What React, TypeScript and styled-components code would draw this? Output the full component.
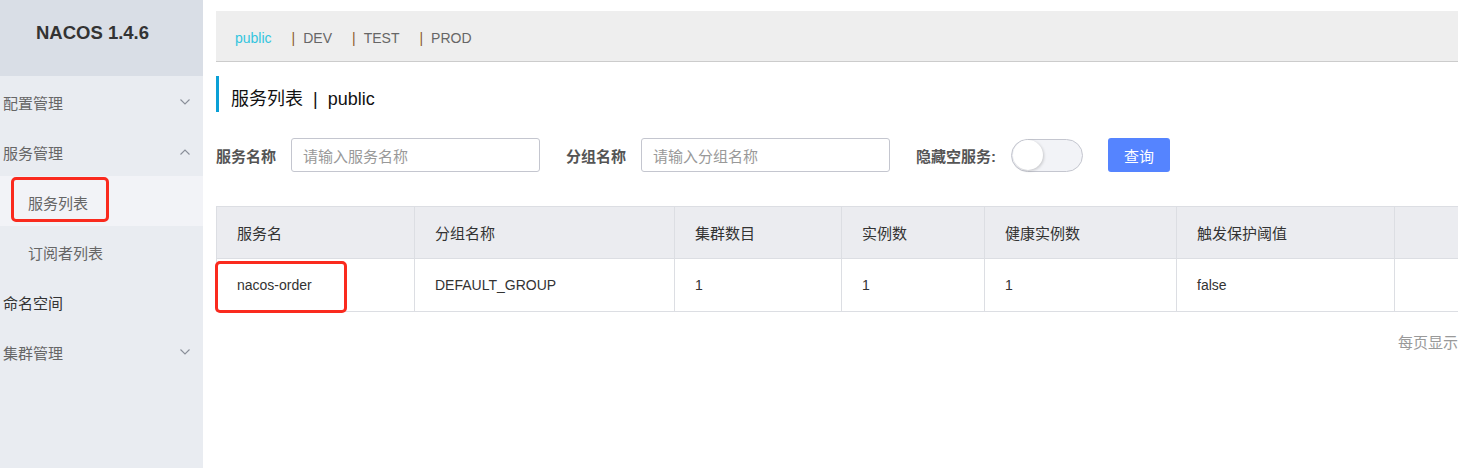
import React from "react";
import styled, { createGlobalStyle } from "styled-components";

const Global = createGlobalStyle`
  html, body { margin: 0; padding: 0; background: #fff; }
  body { font-family: "Liberation Sans", "Noto Sans CJK SC", sans-serif; font-size: 14px; color: #333; overflow: hidden; }
  * { box-sizing: border-box; }
`;

const Page = styled.div`
  position: relative;
  display: flex;
  width: 1458px;
  height: 468px;
  overflow: hidden;
`;

const Sidebar = styled.aside`
  width: 203px;
  flex: none;
  background: #e9ecf1;
  display: flex;
  flex-direction: column;
`;

const Brand = styled.div`
  height: 76px;
  background: #d9dee6;
  display: flex;
  justify-content: center;
  padding: 22px 18px 0 0;
  font-size: 18.5px;
  font-weight: 700;
  color: #333;
  font-family: "Liberation Sans", sans-serif;
`;

const MenuItem = styled.div<{ $dark?: boolean }>`
  height: 50px;
  display: flex;
  align-items: center;
  justify-content: space-between;
  padding: 2px 12px 0 3px;
  font-size: 15px;
  color: ${(p) => (p.$dark ? "#333" : "#666")};
`;

const SubItem = styled.div<{ $active?: boolean }>`
  height: 50px;
  display: flex;
  align-items: center;
  padding: 2px 0 0 28px;
  font-size: 15px;
  color: #666;
  background: ${(p) => (p.$active ? "#f2f3f7" : "transparent")};
`;

const Chevron = ({ up }: { up?: boolean }) => (
  <svg width="12" height="8" viewBox="0 0 12 8" fill="none">
    <path
      d={up ? "M1.5 6.5 L6 2 L10.5 6.5" : "M1.5 1.5 L6 6 L10.5 1.5"}
      stroke="#8a8f99"
      strokeWidth="1.1"
    />
  </svg>
);

const Main = styled.main`
  flex: 1;
  min-width: 0;
  padding: 11px 0 0 13px;
  display: flex;
  flex-direction: column;
`;

const NsBar = styled.div`
  height: 51px;
  background: #eeeeee;
  border-bottom: 1px solid #cccccc;
  display: flex;
  align-items: center;
  padding: 3px 0 0 19px;
  font-size: 14px;
`;

const NsLink = styled.span<{ $active?: boolean }>`
  color: ${(p) => (p.$active ? "#33c5de" : "#666")};
  margin-right: 20px;
`;

const NsSep = styled.span`
  color: #8b5a2b;
  margin-right: 8px;
`;

const Title = styled.div`
  margin-top: 14px;
  height: 36px;
  border-left: 3px solid #0aa0d6;
  padding: 6px 0 0 12px;
  display: flex;
  align-items: center;
  font-size: 18px;
  color: #111;
  white-space: pre;
`;

const Form = styled.div`
  margin-top: 26px;
  display: flex;
  align-items: center;
  height: 34px;
`;

const Label = styled.span<{ $gap: number }>`
  font-weight: 700;
  color: #555;
  font-size: 15px;
  margin-right: ${(p) => p.$gap}px;
`;

const Input = styled.div`
  width: 249px;
  height: 34px;
  border: 1px solid #c4c6cf;
  border-radius: 3px;
  display: flex;
  align-items: center;
  padding: 0 0 0 11px;
  color: #999;
  font-size: 15px;
  margin-right: 26px;
`;

const Switch = styled.div`
  width: 72px;
  height: 33px;
  border: 1px solid #c4c6cf;
  border-radius: 17px;
  background: #f2f3f7;
  display: flex;
  align-items: center;
  padding-left: 1px;
  margin-right: 25px;
`;

const Knob = styled.div`
  width: 30px;
  height: 30px;
  border-radius: 50%;
  background: #fff;
  box-shadow: 1px 1px 3px rgba(0, 0, 0, 0.18);
`;

const Button = styled.button`
  width: 62px;
  height: 34px;
  border: none;
  border-radius: 3px;
  background: #5584ff;
  color: #fff;
  font-family: inherit;
  font-size: 15px;
  padding: 0;
`;

const TableWrap = styled.div`
  margin-top: 34px;
  width: 1300px;
`;

const Table = styled.table`
  border-collapse: collapse;
  table-layout: fixed;
  width: 1300px;
  font-size: 14px;
`;

const Th = styled.th<{ $w: number }>`
  width: ${(p) => p.$w}px;
  height: 52px;
  background: #ebecf0;
  border: 1px solid #dcdee3;
  text-align: left;
  font-weight: 400;
  font-size: 15px;
  color: #333;
  padding: 0 0 0 20px;
`;

const Td = styled.td`
  height: 53px;
  border: 1px solid #dcdee3;
  color: #333;
  padding: 0 0 0 20px;
`;

const Pager = styled.div`
  margin-top: 19px;
  padding-left: 1182px;
  color: #999;
  font-size: 15px;
  white-space: nowrap;
`;

const Mark = styled.div<{ $x: number; $y: number; $w: number; $h: number }>`
  position: absolute;
  left: ${(p) => p.$x}px;
  top: ${(p) => p.$y}px;
  width: ${(p) => p.$w}px;
  height: ${(p) => p.$h}px;
  border: 3px solid #fa2a1e;
  border-radius: 5px;
  pointer-events: none;
`;

const cols = [
  { t: "服务名", w: 198 },
  { t: "分组名称", w: 260 },
  { t: "集群数目", w: 167 },
  { t: "实例数", w: 143 },
  { t: "健康实例数", w: 192 },
  { t: "触发保护阈值", w: 218 },
  { t: "", w: 122 },
];

const row = ["nacos-order", "DEFAULT_GROUP", "1", "1", "1", "false", ""];

export default function App() {
  return (
    <>
      <Global />
      <Page>
        <Sidebar>
          <Brand>NACOS 1.4.6</Brand>
          <MenuItem>
            配置管理
            <Chevron />
          </MenuItem>
          <MenuItem>
            服务管理
            <Chevron up />
          </MenuItem>
          <SubItem $active>服务列表</SubItem>
          <SubItem>订阅者列表</SubItem>
          <MenuItem $dark>命名空间</MenuItem>
          <MenuItem>
            集群管理
            <Chevron />
          </MenuItem>
        </Sidebar>
        <Main>
          <NsBar>
            <NsLink $active>public</NsLink>
            <NsSep>|</NsSep>
            <NsLink>DEV</NsLink>
            <NsSep>|</NsSep>
            <NsLink>TEST</NsLink>
            <NsSep>|</NsSep>
            <NsLink>PROD</NsLink>
          </NsBar>
          <Title>{"服务列表  |  public"}</Title>
          <Form>
            <Label $gap={15}>服务名称</Label>
            <Input>请输入服务名称</Input>
            <Label $gap={15}>分组名称</Label>
            <Input>请输入分组名称</Input>
            <Label $gap={15}>隐藏空服务:</Label>
            <Switch>
              <Knob />
            </Switch>
            <Button>查询</Button>
          </Form>
          <TableWrap>
            <Table>
              <thead>
                <tr>
                  {cols.map((c, i) => (
                    <Th key={i} $w={c.w}>
                      {c.t}
                    </Th>
                  ))}
                </tr>
              </thead>
              <tbody>
                <tr>
                  {row.map((v, i) => (
                    <Td key={i}>{v}</Td>
                  ))}
                </tr>
              </tbody>
            </Table>
          </TableWrap>
          <Pager>每页显示</Pager>
        </Main>
        <Mark $x={11} $y={177} $w={98} $h={45} />
        <Mark $x={215} $y={261} $w={132} $h={52} />
      </Page>
    </>
  );
}
